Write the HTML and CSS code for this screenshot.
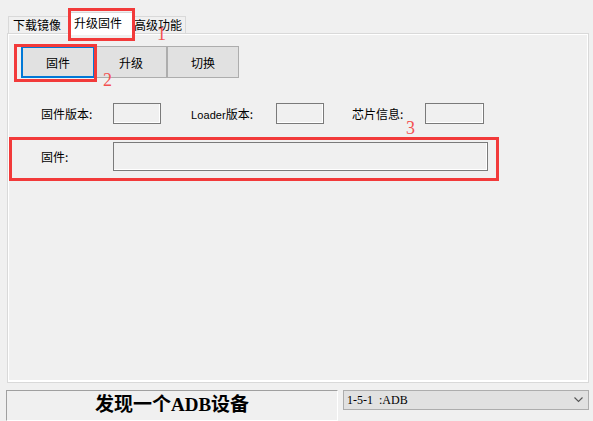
FILE: index.html
```html
<!DOCTYPE html>
<html lang="zh-CN">
<head>
    <meta charset="UTF-8">
    <title>升级固件</title>
    <link rel="stylesheet" href="styles.css">
</head>
<body>
    <div class="app">
        <!-- Tab strip -->
        <div class="tabs">
            <div class="tab tab-first">下载镜像</div>
            <div class="tab active">升级固件</div>
            <div class="tab tab-last">高级功能</div>
        </div>

        <!-- Tab page -->
        <div class="panel">
            <div class="btn-row">
                <button class="btn default">固件</button>
                <button class="btn">升级</button>
                <button class="btn">切换</button>
            </div>

            <div class="info-row">
                <span class="lbl lbl-fw">固件版本:</span>
                <span class="field f-sm gap-a"></span>
                <span class="lbl lbl-loader"><span class="latin">Loader</span>版本:</span>
                <span class="field f-sm gap-b"></span>
                <span class="lbl lbl-chip">芯片信息:</span>
                <span class="field f-md"></span>
            </div>

            <div class="file-row">
                <span class="lbl lbl-fw">固件:</span>
                <span class="field f-wide"></span>
            </div>
        </div>

        <!-- Status bar -->
        <div class="statusbar">
            <div class="status">发现一个ADB设备</div>
            <div class="combo">
                <span class="combo-text">1-5-1  :ADB</span>
                <svg class="chev" width="9" height="6" viewBox="0 0 9 6">
                    <polyline points="0.5,0.5 4.5,4.5 8.5,0.5" fill="none" stroke="#555" stroke-width="1.1"/>
                </svg>
            </div>
        </div>

        <!-- Red annotations drawn over the UI -->
        <div class="mark mark-1"></div>
        <div class="mark mark-2"></div>
        <div class="mark mark-3"></div>
        <span class="num num-1">1</span>
        <span class="num num-2">2</span>
        <span class="num num-3">3</span>
    </div>
</body>
</html>
```

FILE: styles.css
```css
/* ------ Palette ------ */
:root {
    --clr-bg: #f0f0f0;
    --clr-tab-border: #d9d9d9;
    --clr-btn: #e1e1e1;
    --clr-btn-border: #adadad;
    --clr-field-border: #7a7a7a;
    --clr-focus: #0078d7;
    --clr-mark: #f23a3a;
    --clr-text: #000;
}
*,*::before,*::after{box-sizing:border-box;margin:0;padding:0;}
body{
    background:var(--clr-bg);
    color:var(--clr-text);
    font-family:"Noto Sans CJK SC","Liberation Sans",sans-serif;
    font-size:12px;
    width:593px;
    height:421px;
    overflow:hidden;
}
.app{position:relative;width:593px;height:421px;}

/* -------- Tabs -------- */
.tabs{
    display:flex;
    align-items:flex-end;
    height:33px;
    padding-left:8px;
    position:relative;
    z-index:1;
}
.tab{
    height:17px;
    line-height:15px;
    border:1px solid var(--clr-tab-border);
    border-bottom:none;
    background:var(--clr-bg);
    white-space:nowrap;
}
.tab-first{width:62px;padding-left:4px;}
.tab-last{width:55px;padding-left:2px;margin-left:-2px;}
.tab.active{
    position:relative;
    z-index:2;
    width:65px;
    height:22px;
    margin-left:-2px;
    margin-bottom:-1px;
    padding-left:5px;
    line-height:20px;
    background:#fff;
}

/* -------- Panel -------- */
.panel{
    margin:0 4px 0 7px;
    height:350px;
    border:1px solid var(--clr-tab-border);
    box-shadow:inset 0 0 0 1px #fff, inset 0 -2px 0 #fff;
    padding:12px 0 0 13px;
}
.btn-row{display:flex;}
.btn{
    width:72px;
    height:32px;
    border:1px solid var(--clr-btn-border);
    background:var(--clr-btn);
    font:inherit;
    color:var(--clr-text);
}
.btn.default{
    width:74px;
    border-color:var(--clr-focus);
    box-shadow:inset 0 0 0 1px var(--clr-focus);
}

.info-row,.file-row{display:flex;align-items:center;margin-left:20px;}
.info-row{margin-top:25px;}
.file-row{margin-top:18px;}
.lbl{white-space:nowrap;}
.lbl-fw{width:72px;}
.lbl-loader{width:85px;}
.lbl-chip{width:73px;}
.latin{font-family:"Liberation Sans",sans-serif;font-size:11px;letter-spacing:0.1px;}

.field{
    display:block;
    height:21px;
    border:1px solid var(--clr-field-border);
    background:var(--clr-bg);
    box-shadow:inset -1px -1px 0 #fff;
}
.f-sm{width:48px;}
.f-md{width:59px;}
.f-wide{width:375px;height:29px;}
.gap-a{margin-right:30px;}
.gap-b{margin-right:28px;}

/* -------- Status bar -------- */
.statusbar{display:flex;align-items:flex-start;gap:5px;margin-top:7px;padding-left:6px;}
.status{
    width:332px;
    height:31px;
    border-top:1px solid #a0a0a0;
    border-left:1px solid #a0a0a0;
    border-right:1px solid #fff;
    border-bottom:1px solid #fff;
    text-align:center;
    font-family:"Liberation Serif","Noto Sans CJK SC",serif;
    font-weight:700;
    font-size:19px;
    line-height:28px;
}
.combo{
    width:246px;
    height:20px;
    border:1px solid var(--clr-btn-border);
    background:var(--clr-btn);
    display:flex;
    align-items:center;
    justify-content:space-between;
    padding:0 5px 0 3px;
}
.combo-text{
    white-space:pre;
    font-family:"Liberation Serif",serif;
    font-size:12px;
}
.chev{display:block;}

/* -------- Annotations -------- */
.mark{position:absolute;border:3px solid var(--clr-mark);z-index:5;pointer-events:none;}
.mark-1{left:68px;top:8px;width:67px;height:33px;}
.mark-2{left:14px;top:44px;width:83px;height:38px;}
.mark-3{left:9px;top:137px;width:490px;height:44px;}
.num{
    position:absolute;
    z-index:5;
    color:#f35050;
    font-family:"Liberation Serif",serif;
    font-size:18px;
    line-height:1;
}
.num-1{left:157px;top:25px;}
.num-2{left:103px;top:71px;}
.num-3{left:406px;top:119px;}
```
